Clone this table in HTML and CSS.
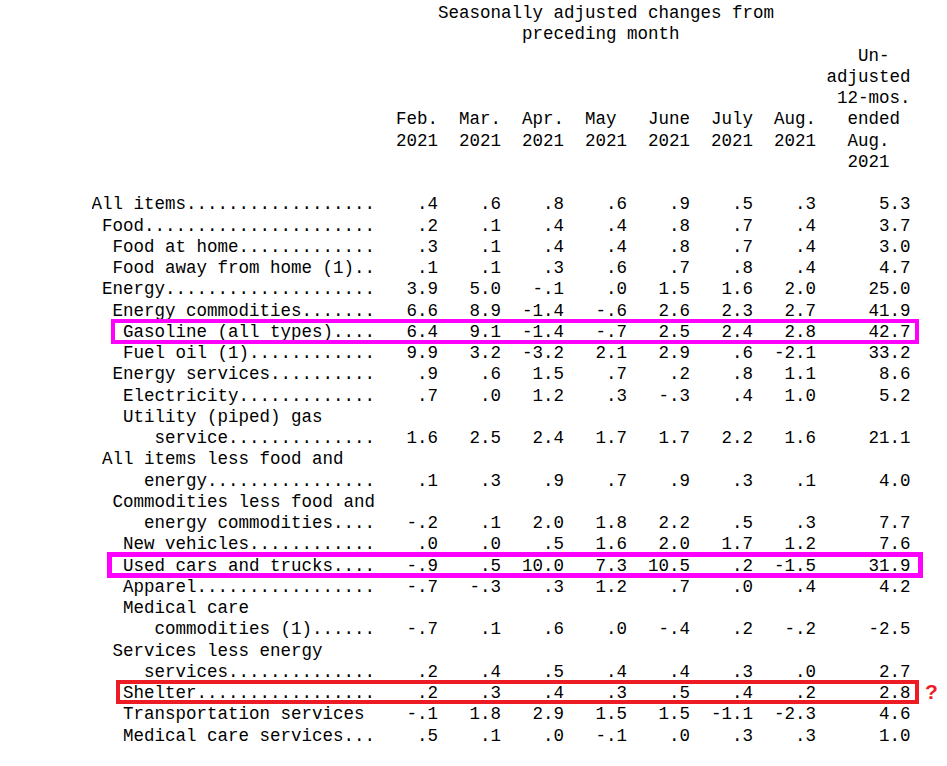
FILE: index.html
```html
<!DOCTYPE html>
<html lang="en">
<head>
<meta charset="utf-8">
<title>CPI table</title>
<link rel="stylesheet" href="styles.css">
</head>
<body>
<div class="sheet">
  <div class="grid head">
    <div class="title">
      <div class="t1">Seasonally adjusted changes from</div>
      <div class="t2">preceding month</div>
    </div>
    <div class="mon m1">Feb.<br>2021</div>
    <div class="mon m2">Mar.<br>2021</div>
    <div class="mon m3">Apr.<br>2021</div>
    <div class="mon m4">May<br>2021</div>
    <div class="mon m5">June<br>2021</div>
    <div class="mon m6">July<br>2021</div>
    <div class="mon m7">Aug.<br>2021</div>
    <div class="unadj">
      <div class="p4">Un-</div>
      <div class="p1">adjusted</div>
      <div class="p2">12-mos.</div>
      <div class="p3">ended</div>
      <div class="p3">Aug.</div>
      <div class="p3">2021</div>
    </div>
  </div>

  <div class="grid row"><div class="lbl dots i0">All items</div><div class="v">.4</div><div class="v">.6</div><div class="v">.8</div><div class="v">.6</div><div class="v">.9</div><div class="v">.5</div><div class="v">.3</div><div class="v">5.3</div></div>
  <div class="grid row"><div class="lbl dots i1">Food</div><div class="v">.2</div><div class="v">.1</div><div class="v">.4</div><div class="v">.4</div><div class="v">.8</div><div class="v">.7</div><div class="v">.4</div><div class="v">3.7</div></div>
  <div class="grid row"><div class="lbl dots i2">Food at home</div><div class="v">.3</div><div class="v">.1</div><div class="v">.4</div><div class="v">.4</div><div class="v">.8</div><div class="v">.7</div><div class="v">.4</div><div class="v">3.0</div></div>
  <div class="grid row"><div class="lbl dots i2">Food away from home (1)</div><div class="v">.1</div><div class="v">.1</div><div class="v">.3</div><div class="v">.6</div><div class="v">.7</div><div class="v">.8</div><div class="v">.4</div><div class="v">4.7</div></div>
  <div class="grid row"><div class="lbl dots i1">Energy</div><div class="v">3.9</div><div class="v">5.0</div><div class="v">-.1</div><div class="v">.0</div><div class="v">1.5</div><div class="v">1.6</div><div class="v">2.0</div><div class="v">25.0</div></div>
  <div class="grid row"><div class="lbl dots i2">Energy commodities</div><div class="v">6.6</div><div class="v">8.9</div><div class="v">-1.4</div><div class="v">-.6</div><div class="v">2.6</div><div class="v">2.3</div><div class="v">2.7</div><div class="v">41.9</div></div>
  <div class="grid row hl hl-gas"><div class="lbl dots i3">Gasoline (all types)</div><div class="v">6.4</div><div class="v">9.1</div><div class="v">-1.4</div><div class="v">-.7</div><div class="v">2.5</div><div class="v">2.4</div><div class="v">2.8</div><div class="v">42.7</div></div>
  <div class="grid row"><div class="lbl dots i3">Fuel oil (1)</div><div class="v">9.9</div><div class="v">3.2</div><div class="v">-3.2</div><div class="v">2.1</div><div class="v">2.9</div><div class="v">.6</div><div class="v">-2.1</div><div class="v">33.2</div></div>
  <div class="grid row"><div class="lbl dots i2">Energy services</div><div class="v">.9</div><div class="v">.6</div><div class="v">1.5</div><div class="v">.7</div><div class="v">.2</div><div class="v">.8</div><div class="v">1.1</div><div class="v">8.6</div></div>
  <div class="grid row"><div class="lbl dots i3">Electricity</div><div class="v">.7</div><div class="v">.0</div><div class="v">1.2</div><div class="v">.3</div><div class="v">-.3</div><div class="v">.4</div><div class="v">1.0</div><div class="v">5.2</div></div>
  <div class="grid row"><div class="lbl i3">Utility (piped) gas</div></div>
  <div class="grid row"><div class="lbl dots i6">service</div><div class="v">1.6</div><div class="v">2.5</div><div class="v">2.4</div><div class="v">1.7</div><div class="v">1.7</div><div class="v">2.2</div><div class="v">1.6</div><div class="v">21.1</div></div>
  <div class="grid row"><div class="lbl i1">All items less food and</div></div>
  <div class="grid row"><div class="lbl dots i5">energy</div><div class="v">.1</div><div class="v">.3</div><div class="v">.9</div><div class="v">.7</div><div class="v">.9</div><div class="v">.3</div><div class="v">.1</div><div class="v">4.0</div></div>
  <div class="grid row"><div class="lbl i2">Commodities less food and</div></div>
  <div class="grid row"><div class="lbl dots i5">energy commodities</div><div class="v">-.2</div><div class="v">.1</div><div class="v">2.0</div><div class="v">1.8</div><div class="v">2.2</div><div class="v">.5</div><div class="v">.3</div><div class="v">7.7</div></div>
  <div class="grid row"><div class="lbl dots i3">New vehicles</div><div class="v">.0</div><div class="v">.0</div><div class="v">.5</div><div class="v">1.6</div><div class="v">2.0</div><div class="v">1.7</div><div class="v">1.2</div><div class="v">7.6</div></div>
  <div class="grid row hl hl-used"><div class="lbl dots i3">Used cars and trucks</div><div class="v">-.9</div><div class="v">.5</div><div class="v">10.0</div><div class="v">7.3</div><div class="v">10.5</div><div class="v">.2</div><div class="v">-1.5</div><div class="v">31.9</div></div>
  <div class="grid row"><div class="lbl dots i3">Apparel</div><div class="v">-.7</div><div class="v">-.3</div><div class="v">.3</div><div class="v">1.2</div><div class="v">.7</div><div class="v">.0</div><div class="v">.4</div><div class="v">4.2</div></div>
  <div class="grid row"><div class="lbl i3">Medical care</div></div>
  <div class="grid row"><div class="lbl dots i6">commodities (1)</div><div class="v">-.7</div><div class="v">.1</div><div class="v">.6</div><div class="v">.0</div><div class="v">-.4</div><div class="v">.2</div><div class="v">-.2</div><div class="v">-2.5</div></div>
  <div class="grid row"><div class="lbl i2">Services less energy</div></div>
  <div class="grid row"><div class="lbl dots i5">services</div><div class="v">.2</div><div class="v">.4</div><div class="v">.5</div><div class="v">.4</div><div class="v">.4</div><div class="v">.3</div><div class="v">.0</div><div class="v">2.7</div></div>
  <div class="grid row hl hl-shelter"><div class="lbl dots i3">Shelter</div><div class="v">.2</div><div class="v">.3</div><div class="v">.4</div><div class="v">.3</div><div class="v">.5</div><div class="v">.4</div><div class="v">.2</div><div class="v">2.8</div><span class="qmark">?</span></div>
  <div class="grid row"><div class="lbl i3">Transportation services</div><div class="v">-.1</div><div class="v">1.8</div><div class="v">2.9</div><div class="v">1.5</div><div class="v">1.5</div><div class="v">-1.1</div><div class="v">-2.3</div><div class="v">4.6</div></div>
  <div class="grid row"><div class="lbl dots i3">Medical care services</div><div class="v">.5</div><div class="v">.1</div><div class="v">.0</div><div class="v">-.1</div><div class="v">.0</div><div class="v">.3</div><div class="v">.3</div><div class="v">1.0</div></div>
</div>
</body>
</html>
```
FILE: styles.css
```css
html, body {
  margin: 0;
  background: #ffffff;
}

.sheet {
  position: relative;
  padding: 3px 0 0 91.5px;
  font-family: "Courier New", "Liberation Mono", monospace;
  font-size: 17.5px;
  line-height: 21.25px;
  color: #000000;
}

.grid {
  display: grid;
  grid-template-columns: 27ch repeat(7, 6ch) 9ch;
  width: 78ch;
}

.head {
  grid-template-rows: repeat(8, 21.25px);
  margin-bottom: 21.25px;
}

.title {
  grid-column: 2 / 9;
  grid-row: 1 / 3;
  white-space: nowrap;
}
.t1 { padding-left: 6ch; }
.t2 { padding-left: 14ch; }

.mon {
  grid-row: 6 / 8;
  padding-left: 2ch;
}
.m1 { grid-column: 2; }
.m2 { grid-column: 3; }
.m3 { grid-column: 4; }
.m4 { grid-column: 5; }
.m5 { grid-column: 6; }
.m6 { grid-column: 7; }
.m7 { grid-column: 8; }

.unadj {
  grid-column: 9;
  grid-row: 3 / 9;
  white-space: nowrap;
}
.p1 { padding-left: 1ch; }
.p2 { padding-left: 2ch; }
.p3 { padding-left: 3ch; }
.p4 { padding-left: 4ch; }

.row {
  height: 21.25px;
}

.lbl {
  grid-column: 1;
  white-space: nowrap;
  overflow: hidden;
}
.lbl.dots::after {
  content: "..................................";
}
.i0 { padding-left: 0; }
.i1 { padding-left: 1ch; }
.i2 { padding-left: 2ch; }
.i3 { padding-left: 3ch; }
.i5 { padding-left: 5ch; }
.i6 { padding-left: 6ch; }

.v {
  text-align: right;
  white-space: nowrap;
}

.hl {
  position: relative;
}
.hl::before {
  content: "";
  position: absolute;
  pointer-events: none;
}
.hl-gas::before {
  top: -3px;
  bottom: -1.3px;
  left: 19.5px;
  right: -8.7px;
  border: 4.4px solid #ff00ff;
}
.hl-used::before {
  top: -3.2px;
  bottom: -1.5px;
  left: 15.8px;
  right: -12.7px;
  border: 5px solid #ff00ff;
}
.hl-shelter::before {
  top: -3px;
  bottom: 0;
  left: 24.5px;
  right: -8.7px;
  border: 4.7px solid #ed1c24;
}

.qmark {
  position: absolute;
  left: 833.5px;
  top: -2.4px;
  font-family: "Liberation Sans", Arial, sans-serif;
  font-weight: bold;
  font-size: 21px;
  line-height: 21px;
  color: #ed1c24;
}
```
